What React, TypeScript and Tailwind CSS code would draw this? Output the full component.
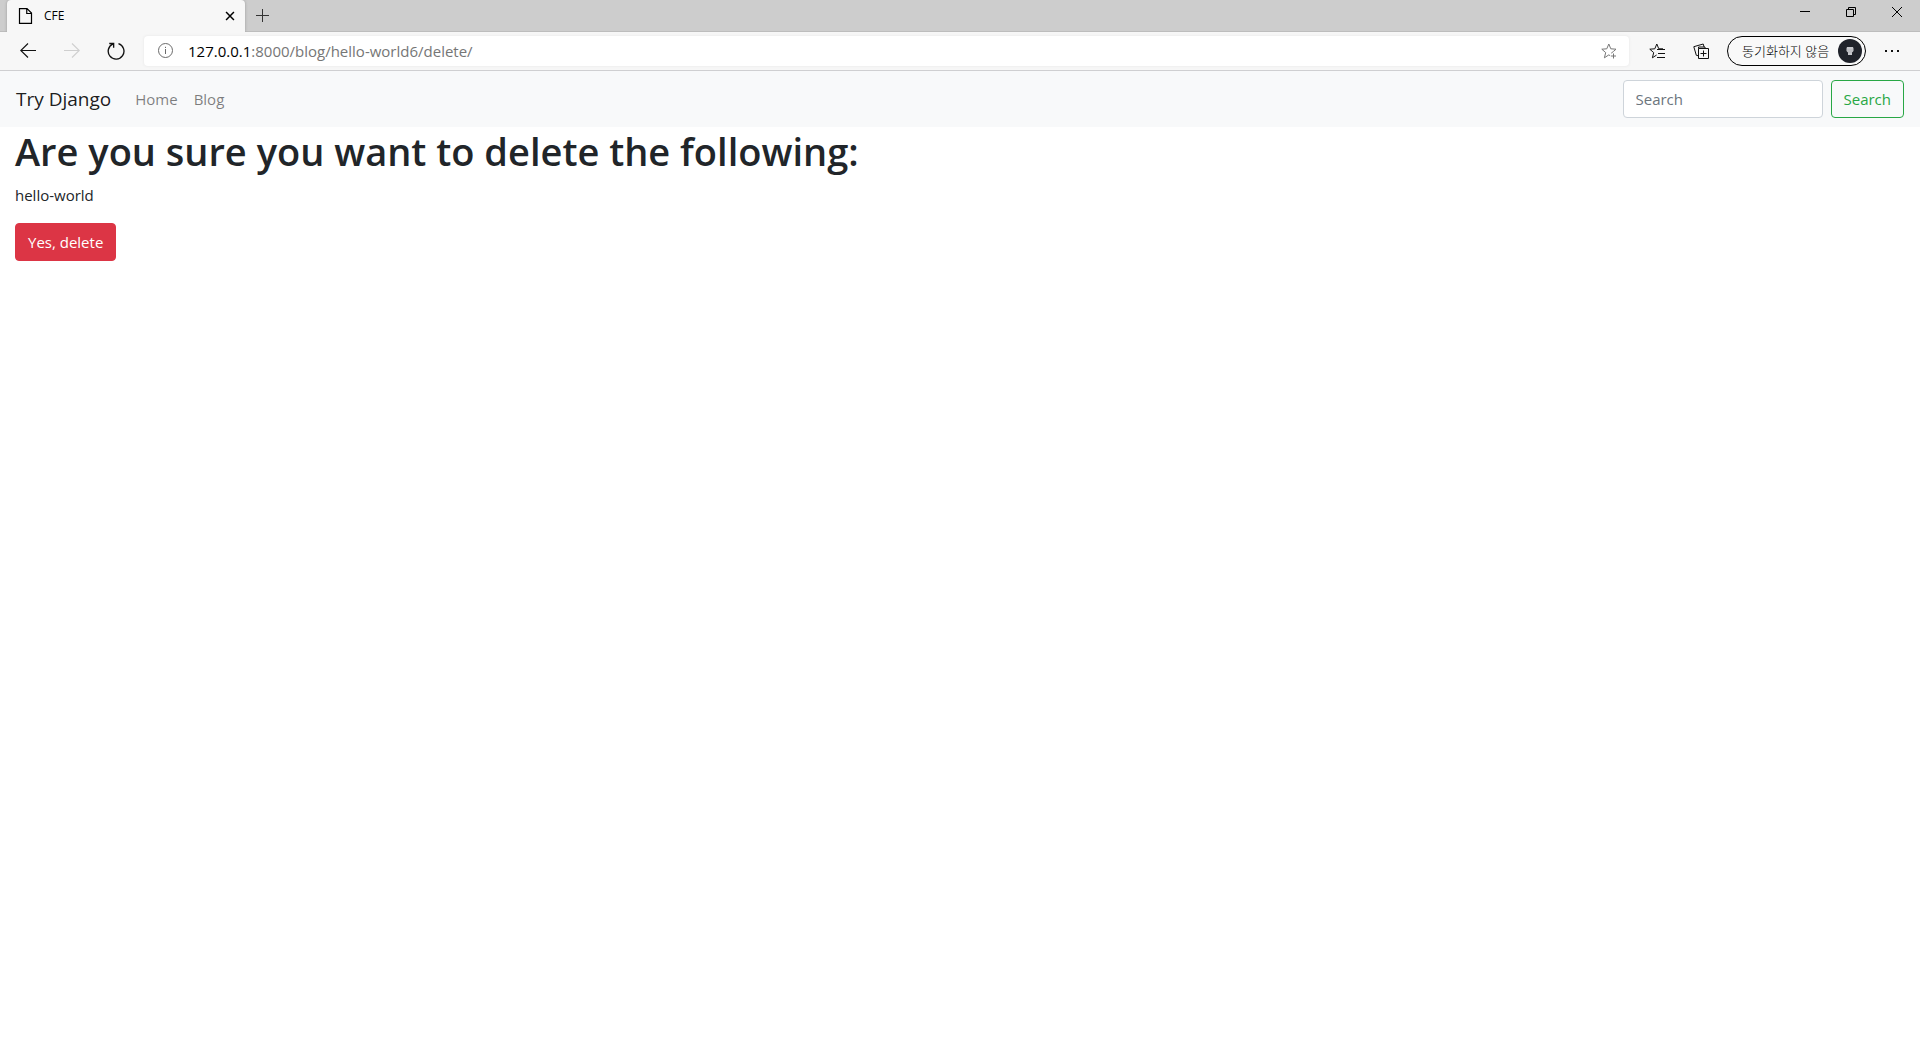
import type { ReactNode } from 'react'

interface IconProps {
  className?: string
  children: ReactNode
}

function Icon({ className = 'w-4 h-4', children }: IconProps) {
  return (
    <svg
      viewBox="0 0 16 16"
      fill="none"
      stroke="currentColor"
      className={`shrink-0 ${className}`}
      aria-hidden="true"
    >
      {children}
    </svg>
  )
}

interface IconButtonProps {
  label: string
  className?: string
  disabled?: boolean
  children: ReactNode
}

function IconButton({
  label,
  className = '',
  disabled,
  children,
}: IconButtonProps) {
  return (
    <button
      type="button"
      aria-label={label}
      disabled={disabled}
      className={`flex items-center justify-center shrink-0 ${className}`}
    >
      {children}
    </button>
  )
}

function TabStrip() {
  return (
    <div className="flex h-8 bg-[#cdcdcd] shadow-[inset_0_-1px_0_#bdbdbd]">
      <div className="w-[238px] ml-[7px] pl-2.5 pr-2 flex items-center rounded-t bg-[#f7f7f7] shadow-[0_0_3px_#999] [clip-path:inset(0_-4px_0_-4px)]">
        <Icon className="w-4 h-4 text-black">
          <path
            d="M2.5.6H10l4.5 4.5v10.3h-12zM9.75.6v4.9h4.75"
            strokeWidth="1.2"
          />
        </Icon>
        <span className="ml-[11px] text-xs text-black">CFE</span>
        <IconButton label="Close tab" className="ml-auto w-[14px] h-4">
          <Icon className="w-[14px] h-[14px] text-black">
            <path d="M3.5 3.5l9 9M12.5 3.5l-9 9" strokeWidth="1.7" />
          </Icon>
        </IconButton>
      </div>
      <IconButton label="New tab" className="w-[34px] text-[#333]">
        <Icon>
          <path d="M8.5 1v13M2 7.5h13" />
        </Icon>
      </IconButton>
      <div className="ml-auto flex h-[23px] text-black">
        <IconButton label="Minimize" className="w-[46px]">
          <Icon>
            <path d="M3 7.5h10" />
          </Icon>
        </IconButton>
        <IconButton label="Restore" className="w-[46px]">
          <Icon>
            <path d="M3.5 5.5h7v7h-7zM5.5 5.5v-2h7v7h-2" />
          </Icon>
        </IconButton>
        <IconButton label="Close" className="w-[46px]">
          <Icon>
            <path d="M3 3l10 10M13 3L3 13" />
          </Icon>
        </IconButton>
      </div>
    </div>
  )
}

function Toolbar() {
  return (
    <div className="flex items-center h-[39px] pl-1.5 border-b border-[#cfcfd1] bg-[#f7f7f7] text-[#111]">
      <IconButton label="Back" className="w-11">
        <Icon>
          <path d="M16 7.5H.8M8 .5L.8 7.5l7.2 7" strokeWidth="1.1" />
        </Icon>
      </IconButton>
      <IconButton label="Forward" className="w-11 text-[#cfcfcf]" disabled>
        <Icon>
          <path d="M0 7.5h15.2M8 .5l7.2 7-7.2 7" strokeWidth="1.1" />
        </Icon>
      </IconButton>
      <IconButton label="Reload" className="w-11">
        <Icon className="w-[18px] h-[18px]">
          <path
            d="M10.2 1.5A7 7 0 1 1 5.4 1.7M2 1.3h3.9v3.9"
            strokeWidth="1.2"
          />
        </Icon>
      </IconButton>
      <div className="flex items-center flex-1 h-[30px] ml-1.5 pl-3.5 pr-3 rounded bg-white shadow-[0_0_3px_#e4e4e4]">
        <Icon className="w-4 h-4 text-[#6b6b6b]">
          <circle cx="7.5" cy="7.5" r="7" />
          <path d="M7.5 6V11M7.5 3.8v1.2" />
        </Icon>
        <div
          role="textbox"
          aria-label="Address"
          contentEditable
          suppressContentEditableWarning
          className="ml-3.5 flex-1 text-[#767676] outline-none"
        >
          <span className="text-black">127.0.0.1</span>
          :8000/blog/hello-world6/delete/
        </div>
        <IconButton label="Add to favorites" className="text-[#777]">
          <Icon>
            <path d="M10.2 10.2l2.2-1.7L15 6.2l-5.2-.4L7.8 1 5.8 5.8.8 6.2l3.9 3.4-1.3 5.2 4.4-2.9 1.4.8M12.5 10.5v5M10 13h5" />
          </Icon>
        </IconButton>
      </div>
      <IconButton label="Favorites" className="ml-1.5 w-11">
        <Icon>
          <path d="M14 5.8H9.8L7.8 1 5.8 5.8.8 6.2l3.9 3.4-1.3 5.2 4.2-2.8M8 6.5h8M9 10.5h7M8 14.5h8" />
        </Icon>
      </IconButton>
      <IconButton label="Collections" className="w-11">
        <Icon>
          <path d="M5.5 5.5h10v10h-10zM10.5 7.5v6M7.5 10.5h6M5 12.7l-1.7-.4L.8 3.7 10.2 1l.9 3M5.5 5.5V4h6.5v1.5" />
        </Icon>
      </IconButton>
      <button
        type="button"
        className="flex items-center justify-between w-[139px] h-[30px] ml-1 pl-3.5 pr-[3px] border border-black rounded-full bg-[#f9f9f9] text-[13px] font-light text-black"
      >
        동기화하지 않음
        <span className="flex items-center justify-center w-6 h-6 rounded-full bg-[#20232b]">
          <Icon className="w-2 h-2">
            <path
              d="M2 0h12l1 3v5l-3 3v5H4v-5L1 8V3z"
              fill="#c6c7cc"
              stroke="none"
            />
            <path d="M2 6h12M4 10h8" stroke="#9c9ca4" />
          </Icon>
        </span>
      </button>
      <IconButton label="Settings and more" className="ml-1.5 mr-2 w-10">
        <Icon>
          <path
            d="M1 7h2v2H1zM7 7h2v2H7zM13 7h2v2h-2z"
            fill="currentColor"
            stroke="none"
          />
        </Icon>
      </IconButton>
    </div>
  )
}

function Navbar() {
  return (
    <nav className="flex items-center h-14 px-4 bg-[#f8f9fa]">
      <a href="#" className="mr-4 text-[19px] text-black/90">
        Try Django
      </a>
      <a href="#" className="p-2 text-black/50">
        Home
      </a>
      <a href="#" className="p-2 text-black/50">
        Blog
      </a>
      <form className="flex gap-2 ml-auto">
        <input
          type="search"
          aria-label="Search"
          placeholder="Search"
          className="w-[200px] h-[38px] px-3 border border-[#ced4da] rounded bg-white placeholder:text-[#6c757d]"
        />
        <button
          type="button"
          className="h-[38px] px-3 border border-[#28a745] rounded text-[#28a745]"
        >
          Search
        </button>
      </form>
    </nav>
  )
}

export default function App() {
  return (
    <div className="min-h-screen bg-white font-['Open_Sans','Noto_Sans_CJK_KR',sans-serif] text-[15px] leading-6 text-[#212529]">
      <TabStrip />
      <Toolbar />
      <Navbar />
      <main className="px-[15px]">
        <h1 className="mb-2 text-[38px] leading-[48px] font-semibold">
          Are you sure you want to delete the following:
        </h1>
        <p className="mb-4">hello-world</p>
        <button
          type="button"
          className="h-[38px] px-3 border border-[#dc3545] rounded bg-[#dc3545] text-white"
        >
          Yes, delete
        </button>
      </main>
    </div>
  )
}
